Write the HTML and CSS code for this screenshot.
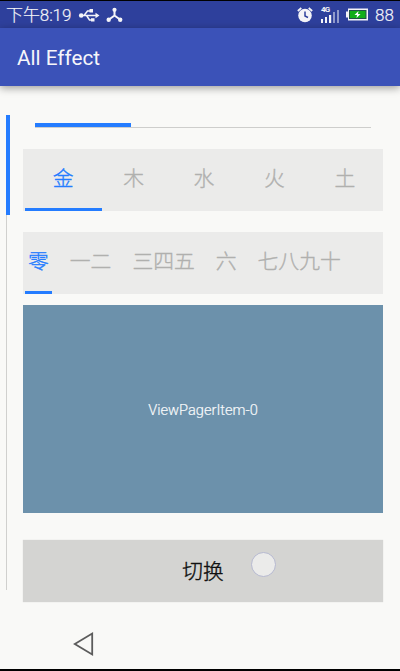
FILE: index.html
```html
<!DOCTYPE html>
<html lang="zh-CN">
<head>
<meta charset="utf-8">
<title>All Effect</title>
<link rel="stylesheet" href="styles.css">
</head>
<body>
<div class="screen">
  <header class="status">
    <span class="clock">下午8:19</span>
    <svg class="usb" width="22" height="14" viewBox="0 0 22 14" fill="none" stroke="currentColor" stroke-width="1.5">
      <path d="M3 7.5H18M6 7.5L9.5 3H12M8.500 7.500L11.500 12H14"/>
      <circle cx="3.200" cy="7.500" r="2.300" fill="currentColor" stroke="none"/>
      <path d="M17.500 4.700L21.500 7.500L17.500 10.300ZM11.500 1H15V4.600H11.500ZM13 10.200H16.500V13.600H13Z" fill="currentColor" stroke="none"/>
    </svg>
    <svg class="hub" width="17" height="16" viewBox="0 0 17 16" fill="none" stroke="currentColor" stroke-width="2">
      <path d="M8.500 3V8.500L3 12.500M8.500 8.500L14 12.500"/>
      <g fill="currentColor" stroke="none"><circle cx="8.500" cy="2.800" r="2.100"/><circle cx="2.700" cy="12.700" r="2.200"/><circle cx="14.200" cy="12.700" r="2.200"/></g>
    </svg>
    <svg class="alarm" width="16" height="16" viewBox="0 0 16 16" fill="none">
      <circle cx="8" cy="8.500" r="6.800" fill="currentColor"/>
      <path d="M.8 4L4.300 1M15.200 4L11.700 1" stroke="currentColor" stroke-width="1.700"/>
      <path d="M8 4.500V9L11 10.500" stroke="#2e409c" stroke-width="1.500"/>
    </svg>
    <span class="signal">
      <span class="network">4G</span>
      <svg width="19" height="14" viewBox="0 0 19 14" fill="currentColor">
        <path d="M0 10H2V14H0ZM4 8H6V14H4ZM8 6H10.200V14H8Z"/>
        <path d="M12 3H14V14H12ZM16 1H18V14H16Z" opacity=".5"/>
      </svg>
    </span>
    <svg class="battery" width="22" height="13" viewBox="0 0 22 13">
      <path d="M2 .5H22V12.500H2V9.500H0V3.500H2Z" fill="#f4f4f8"/>
      <path d="M3 2H20.500V11H3Z" fill="#245248"/>
      <path d="M4 3H19.500V10H4Z" fill="#12ad18"/>
      <path d="M12.500 3L8.500 7H11L10.500 10L14.500 6H12Z" fill="#fff"/>
    </svg>
    <span class="level">88</span>
  </header>
  <div class="appbar">All Effect</div>
  <main class="content">
    <div class="rail"><div class="rail-thumb"></div></div>
    <div class="column">
      <div class="track"><div class="track-thumb"></div></div>
      <nav class="tabs fixed">
        <span class="tab active">金</span><span class="tab">木</span><span class="tab">水</span><span class="tab">火</span><span class="tab">土</span>
      </nav>
      <nav class="tabs scroll">
        <span class="tab active">零</span><span class="tab">一二</span><span class="tab">三四五</span><span class="tab">六</span><span class="tab">七八九十</span>
      </nav>
      <section class="pager">ViewPagerItem-0</section>
      <div class="switch">切换<span class="touch"></span></div>
    </div>
  </main>
  <footer class="navbar">
    <svg width="22" height="24" viewBox="0 0 22 24" fill="none" stroke="#5c5c5c" stroke-width="1.800"><path d="M1.800 12L19.200 1.600V22.400Z"/></svg>
  </footer>
</div>
</body>
</html>
```
FILE: styles.css
```css
* { box-sizing: border-box; }
body { margin: 0; background: #f9f9f7; font-family: Roboto, "Noto Sans CJK SC", sans-serif; }
.screen { height: 671px; display: flex; flex-direction: column; overflow: hidden; border-top: 1px solid #000; border-bottom: 2px solid #000; }
.status { height: 27px; flex: none; display: flex; align-items: center; padding: 0 6px 0 6px; background: #2e409c; color: #f4f4f8; font-weight: 300; font-size: 18px; line-height: 26px; }
.clock { width: 72px; white-space: nowrap; font-size: 17px; letter-spacing: -.1px; -webkit-text-stroke: .2px currentColor; }
.usb { flex: none; }
.hub { flex: none; margin-left: 6px; }
.alarm { flex: none; margin-left: auto; }
.signal { width: 19px; height: 16px; margin-left: 8px; position: relative; display: flex; align-items: flex-end; }
.network { position: absolute; left: 0; top: -1px; font-size: 8px; font-weight: 700; line-height: 8px; letter-spacing: -.8px; }
.battery { flex: none; margin-left: 6px; }
.level { width: 19px; margin-left: 7px; font-size: 17px; -webkit-text-stroke: .2px currentColor; }
.appbar { height: 58px; flex: none; padding-left: 17px; background: #3b52b8; color: #f6f6fa; font-size: 20.7px; line-height: 60px; box-shadow: 0 2px 8px rgba(0, 0, 0, .38); }
.content { display: flex; flex: none; height: 516px; padding: 29px 17px 0 6px; }
.rail { width: 17px; height: 475px; flex: none; background: linear-gradient(#d0d0ce, #d0d0ce) 0 0 / 1px 100% no-repeat; }
.rail-thumb { width: 4px; height: 100px; background: #247cff; }
.column { width: 360px; flex: none; }
.track { margin: 8px 12px 21px; height: 5px; border-bottom: 1px solid #cececc; }
.track-thumb { width: 96px; height: 4px; background: #247cff; }
.tabs { display: flex; height: 62px; background: #ebebea; color: #b0b0ae; font-weight: 300; font-size: 20.8px; line-height: 60px; -webkit-text-stroke: .35px currentColor; }
.tab { position: relative; white-space: nowrap; }
.active { color: #247cff; }
.active::after { content: ""; position: absolute; bottom: 0; height: 3px; background: #247cff; }
.fixed { padding: 0 3px 0 5px; }
.fixed .tab { flex: 1; text-align: center; }
.fixed .active::after { left: -3px; width: 77px; }
.scroll { margin-top: 21px; padding-left: 5px; gap: 21px; line-height: 61px; }
.scroll .active::after { left: -3px; width: 27px; }
.pager { height: 208px; margin-top: 11px; background: #6c91ab; color: #f6f8fa; font-size: 14.6px; font-weight: 300; line-height: 211px; text-align: center; -webkit-text-stroke: .2px currentColor; }
.switch { position: relative; height: 62px; margin-top: 27px; background: #d4d4d2; box-shadow: 0 0 1px #d4d4d2; color: #111; font-size: 20.7px; font-weight: 300; line-height: 64px; text-align: center; -webkit-text-stroke: .4px currentColor; }
.touch { position: absolute; left: 228px; top: 12px; width: 25px; height: 25px; border: 1px solid #b6b9d0; border-radius: 50%; background: #ebebea; }
.navbar { display: flex; padding: 30px 0 0 73px; }
```
